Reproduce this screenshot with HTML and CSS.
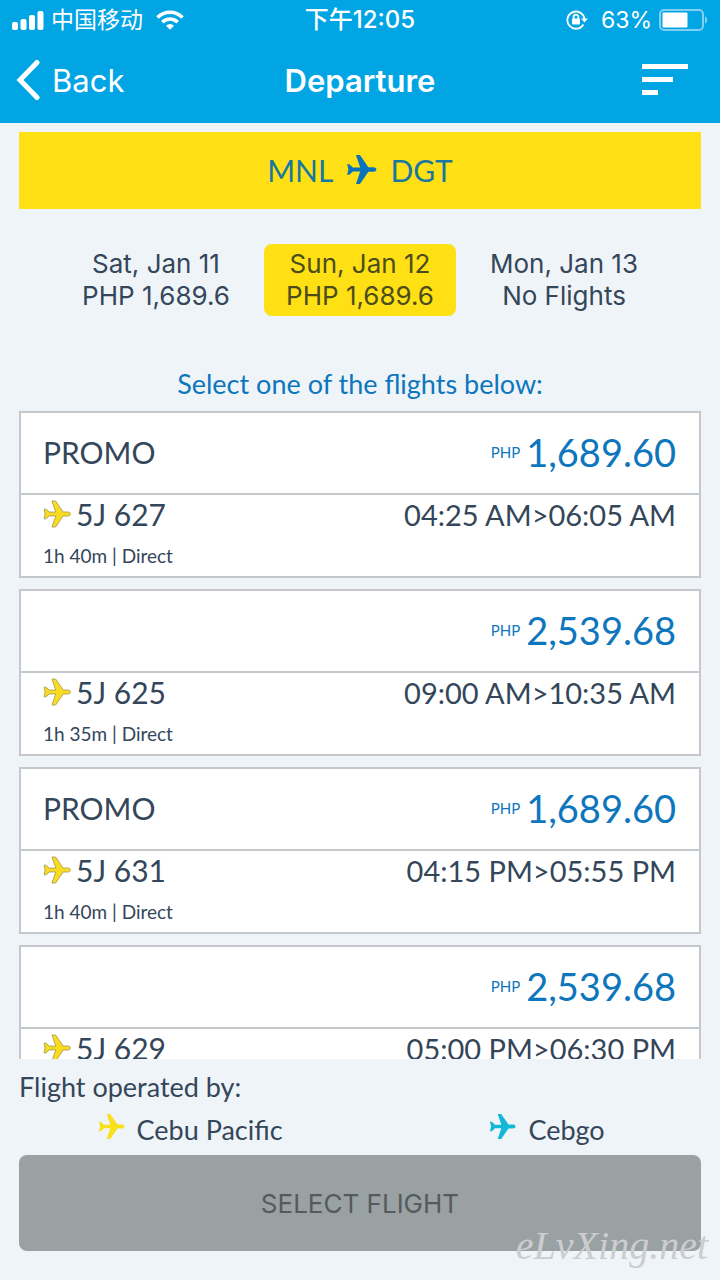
FILE: index.html
```html
<!DOCTYPE html>
<html lang="en">
<head>
    <title>Departure</title>
    <meta charset="UTF-8">
    <meta name="viewport" content="width=device-width, initial-scale=1.0">
    <link rel="stylesheet" href="styles.css">
</head>
<body>
    <svg class="sprite" aria-hidden="true">
        <symbol id="plane" viewBox="0 0 28 28">
            <path d="M1 9.200h2l3.200 2.900h6.600L9 1h3.600l7.600 11h4.600c1.700 0 2.700 1 2.700 2s-1 2-2.700 2h-4.600l-7.600 11H9l3.800-11.100H6.200L3 18.800H1L2.200 14z"/>
        </symbol>
    </svg>

    <header>
        <div class="status">
            <div class="carrier">
                <svg width="32" height="20" viewBox="0 0 32 20" fill="currentColor">
                    <rect x="0" y="12" width="6" height="8" rx="2"/>
                    <rect x="8.500" y="9" width="6" height="11" rx="2"/>
                    <rect x="17" y="5" width="6" height="15" rx="2"/>
                    <rect x="25.500" y="1" width="6" height="19" rx="2"/>
                </svg>
                <span>中国移动</span>
                <svg class="wifi" width="28" height="20" viewBox="0 0 28 20" fill="none" stroke="currentColor" stroke-width="3.600">
                    <path d="M1.500 7.500a17.500 17.500 0 0 1 25 0"/>
                    <path d="M6.300 12.200a10.800 10.800 0 0 1 15.400 0"/>
                    <path d="M10 15.800a5.600 5.600 0 0 1 8 0L14 19.800z" fill="currentColor" stroke="none"/>
                </svg>
            </div>
            <span class="clock">下午12:05</span>
            <div class="battery">
                <svg width="22" height="20" viewBox="0 0 22 20" fill="none" stroke="currentColor" stroke-width="1.800">
                    <path d="M17.400 14.500A8.600 8.600 0 1 1 18.500 9"/>
                    <path d="M15 8.500h7L18.500 12.500z" fill="currentColor" stroke="none"/>
                    <path d="M7.600 9V7a2.400 2.400 0 0 1 4.800 0v2"/>
                    <rect x="6" y="8.500" width="8" height="6" rx="1" fill="currentColor" stroke="none"/>
                </svg>
                <span>63%</span>
                <svg width="49" height="22" viewBox="0 0 49 22">
                    <rect x="1" y="1" width="43" height="20" rx="4" fill="none" stroke="#7fd0f3" stroke-width="2"/>
                    <rect x="3.500" y="3.500" width="25" height="15" rx="1" fill="#fff"/>
                    <path d="M46 7.500c3 1 3 6 0 7z" fill="#7fd0f3"/>
                </svg>
            </div>
        </div>
        <nav>
            <a class="back" href="#">
                <svg width="24" height="42" viewBox="0 0 24 42" fill="none" stroke="currentColor" stroke-width="5" stroke-linecap="round" stroke-linejoin="miter">
                    <path d="M21 3.500L4 21l17 17.500"/>
                </svg>
                Back
            </a>
            <h1>Departure</h1>
            <button class="sort" type="button" aria-label="Sort">
                <svg width="46" height="32" viewBox="0 0 46 32" fill="currentColor">
                    <rect width="46" height="5"/>
                    <rect y="13" width="31" height="5"/>
                    <rect y="26" width="16" height="5"/>
                </svg>
            </button>
        </nav>
    </header>

    <main>
        <div class="route">
            <span>MNL</span>
            <svg class="plane"><use href="#plane"/></svg>
            <span>DGT</span>
        </div>

        <div class="dates">
            <button type="button">Sat, Jan 11<br>PHP 1,689.6</button>
            <button type="button" class="active">Sun, Jan 12<br>PHP 1,689.6</button>
            <button type="button">Mon, Jan 13<br>No Flights</button>
        </div>

        <h2>Select one of the flights below:</h2>

        <div class="flights">
            <div class="flight">
                <div class="fare">
                    <span class="promo">PROMO</span>
                    <span class="currency">PHP</span>
                    <span class="price">1,689.60</span>
                </div>
                <div class="details">
                    <svg class="plane"><use href="#plane"/></svg>
                    <span class="number">5J 627</span>
                    <span class="time">04:25 AM&gt;06:05 AM</span>
                </div>
                <p>1h 40m | Direct</p>
            </div>
            <div class="flight">
                <div class="fare">
                    <span class="promo"></span>
                    <span class="currency">PHP</span>
                    <span class="price">2,539.68</span>
                </div>
                <div class="details">
                    <svg class="plane"><use href="#plane"/></svg>
                    <span class="number">5J 625</span>
                    <span class="time">09:00 AM&gt;10:35 AM</span>
                </div>
                <p>1h 35m | Direct</p>
            </div>
            <div class="flight">
                <div class="fare">
                    <span class="promo">PROMO</span>
                    <span class="currency">PHP</span>
                    <span class="price">1,689.60</span>
                </div>
                <div class="details">
                    <svg class="plane"><use href="#plane"/></svg>
                    <span class="number">5J 631</span>
                    <span class="time">04:15 PM&gt;05:55 PM</span>
                </div>
                <p>1h 40m | Direct</p>
            </div>
            <div class="flight">
                <div class="fare">
                    <span class="promo"></span>
                    <span class="currency">PHP</span>
                    <span class="price">2,539.68</span>
                </div>
                <div class="details">
                    <svg class="plane"><use href="#plane"/></svg>
                    <span class="number">5J 629</span>
                    <span class="time">05:00 PM&gt;06:30 PM</span>
                </div>
            </div>
        </div>
    </main>

    <footer>
        <h3>Flight operated by:</h3>
        <div class="operators">
            <div class="operator cebu">
                <svg class="plane"><use href="#plane"/></svg>
                <span>Cebu Pacific</span>
            </div>
            <div class="operator cebgo">
                <svg class="plane"><use href="#plane"/></svg>
                <span>Cebgo</span>
            </div>
        </div>
        <button class="select" type="button" disabled>SELECT FLIGHT</button>
        <span class="watermark">eLvXing.net</span>
    </footer>
</body>
</html>
```

FILE: styles.css
```css
* {
    box-sizing: border-box;
}
body {
    display: flex;
    flex-direction: column;
    height: 100vh;
    margin: 0;
    background-color: #eff4f8;
    color: #34465a;
    font-family: Lato, sans-serif;
}
button {
    border: none;
    padding: 0;
    background: none;
    color: inherit;
    cursor: pointer;
}
h1, h2, h3, p {
    margin: 0;
    font-weight: normal;
}
svg {
    flex: none;
    display: block;
}
.sprite {
    display: none;
}
.plane {
    width: 28px;
    height: 28px;
    fill: currentColor;
}

/* top bar */
header {
    flex: none;
    background-color: #02a5e4;
    color: white;
    font-family: Inter, "Noto Sans CJK SC", sans-serif;
}
.status, nav {
    display: grid;
    grid-template-columns: 1fr auto 1fr;
    align-items: center;
}
.status {
    height: 40px;
    padding: 0 12px;
    font-size: 23px;
    line-height: 40px;
}
.carrier, .battery {
    display: flex;
    align-items: center;
    gap: 7px;
}
.wifi {
    margin-left: 6px;
}
.clock {
    font-size: 24px;
    font-weight: 500;
}
.battery {
    justify-content: flex-end;
}
.battery span {
    margin-left: 6px;
}
nav {
    height: 80px;
    margin-bottom: 3px;
    padding: 0 16px;
    font-size: 31px;
}
.back {
    display: flex;
    align-items: center;
    gap: 12px;
    color: white;
    text-decoration: none;
}
h1 {
    font-size: 31px;
    font-weight: 600;
}
.sort {
    justify-self: end;
    margin-right: 16px;
}

/* route and dates */
main {
    flex: 1;
    min-height: 0;
    display: flex;
    flex-direction: column;
    padding: 9px 19px 0;
}
.route {
    flex: none;
    display: flex;
    justify-content: center;
    align-items: center;
    gap: 13px;
    height: 77px;
    padding-bottom: 2px;
    background-color: #ffe014;
    color: #1878a0;
    font-size: 30px;
}
.route .plane {
    width: 31px;
    height: 31px;
    color: #0a74ba;
}
.dates {
    flex: none;
    display: flex;
    justify-content: center;
    gap: 12px;
    margin: 35px 0 52px;
}
.dates button {
    width: 192px;
    padding: 4px 0;
    border-radius: 8px;
    font-family: Inter, sans-serif;
    font-size: 26px;
    line-height: 32px;
}
.dates .active {
    background-color: #ffe014;
    color: #4a4c1c;
}
h2 {
    flex: none;
    margin-bottom: 11px;
    color: #0e76bc;
    font-size: 27px;
    line-height: 32px;
    text-align: center;
}

/* flight list */
.flights {
    flex: 1;
    min-height: 0;
    overflow: hidden;
}
.flight {
    height: 167px;
    margin-bottom: 11px;
    border: 2px solid #c6c7cb;
    background-color: white;
}
.fare {
    display: flex;
    align-items: center;
    height: 82px;
    padding: 0 23px 2px 22px;
    border-bottom: 2px solid #c6c7cb;
}
.promo {
    flex: 1;
    font-size: 30px;
}
.currency {
    margin-right: 6px;
    color: #0e76bc;
    font-size: 15px;
}
.price {
    color: #0e76bc;
    font-size: 38px;
}
.details {
    display: flex;
    align-items: center;
    height: 38px;
    padding: 0 23px 0 22px;
    font-size: 30px;
}
.details .plane {
    color: #fadc1e;
    stroke: #b3a65c;
    stroke-width: 1;
    stroke-linejoin: round;
}
.number {
    flex: 1;
    margin-left: 5px;
}
.time {
    font-size: 29px;
}
.flight p {
    padding: 0 22px;
    font-size: 19px;
    line-height: 46px;
}

/* bottom part */
footer {
    flex: none;
    position: relative;
    padding: 8px 19px 29px;
}
h3 {
    font-size: 27px;
    line-height: 40px;
}
.operators {
    display: grid;
    grid-template-columns: 10fr 9fr;
    gap: 32px;
    height: 48px;
}
.operator {
    display: flex;
    justify-content: center;
    align-items: flex-start;
    gap: 12px;
    padding-top: 6px;
    font-size: 27px;
    line-height: 34px;
}
.operator .plane {
    width: 27px;
    height: 27px;
}
.cebu .plane {
    color: #fadf1c;
}
.cebgo .plane {
    color: #12b8d6;
}
.select {
    display: block;
    width: 100%;
    height: 96px;
    border-radius: 8px;
    background-color: #99a1a3;
    color: #555a5c;
    font-family: Inter, sans-serif;
    font-size: 26px;
}
.watermark {
    position: absolute;
    right: 12px;
    bottom: 12px;
    color: #cccdd0;
    font-family: "Brush Script MT", "Liberation Serif", cursive;
    font-size: 40px;
    font-style: italic;
    line-height: 44px;
}
```
